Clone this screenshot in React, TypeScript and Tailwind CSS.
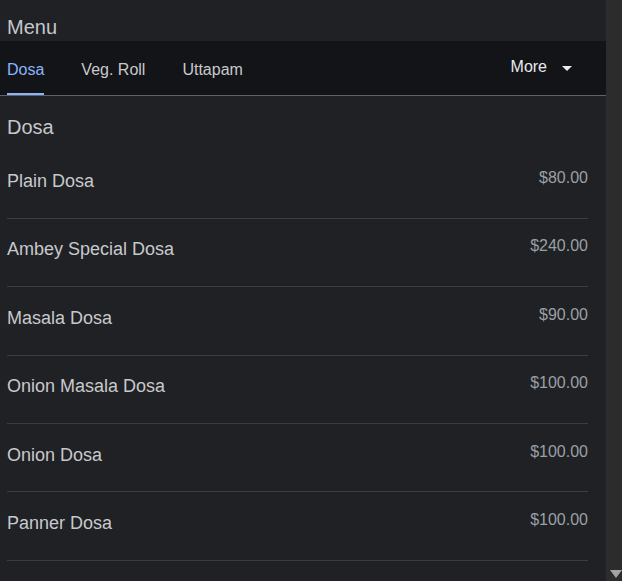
const tabs = ["Dosa", "Veg. Roll", "Uttapam"];

const items = [
  { name: "Plain Dosa", price: "$80.00" },
  { name: "Ambey Special Dosa", price: "$240.00" },
  { name: "Masala Dosa", price: "$90.00" },
  { name: "Onion Masala Dosa", price: "$100.00" },
  { name: "Onion Dosa", price: "$100.00" },
  { name: "Panner Dosa", price: "$100.00" },
];

export default function App() {
  return (
    <div className="flex h-[581px] w-[622px] overflow-hidden bg-[#202124] font-['Liberation_Sans',Arial,sans-serif]">
      <div className="flex min-w-0 flex-1 flex-col">
        <div className="h-[41px] px-[7px] pt-[13px] text-[20px] leading-[28px] text-[#c4c7cc]">Menu</div>

        <div className="flex h-[55px] border-b border-[#5f6368] bg-[#131418] pl-[7px]">
          <div className="flex gap-[37px]">
            {tabs.map((tab, i) => (
              <div
                key={tab}
                className={
                  i === 0
                    ? "flex h-[54px] items-center border-b-2 border-[#8ab4f8] pt-[5px] text-[16px] text-[#8ab4f8]"
                    : "flex h-[54px] items-center border-b-2 border-transparent pt-[5px] text-[16px] text-[#c8c9cc]"
                }
              >
                {tab}
              </div>
            ))}
          </div>
          <div className="ml-auto flex h-[54px] items-center gap-[15px] pr-[34px]">
            <span className="-mt-[3px] text-[16px] text-[#e8eaed]">More</span>
            <svg width="10" height="5" viewBox="0 0 10 5">
              <path d="M0 0h10L5 5z" fill="#e8eaed" />
            </svg>
          </div>
        </div>

        <div className="h-[54.5px] px-[7px] pt-[16.5px] text-[20px] leading-[28px] text-[#c4c7cc]">Dosa</div>

        <div className="pl-[7px] pr-[18px]">
          {items.map((item) => (
            <div key={item.name} className="flex h-[68.4px] justify-between border-b border-[#3c3d41]">
              <span className="mt-[18.5px] text-[18px] leading-[24px] text-[#c8c9cc]">{item.name}</span>
              <span className="mt-[15.5px] text-[16px] leading-[24px] text-[#9aa0a6]">{item.price}</span>
            </div>
          ))}
        </div>
      </div>

      <div className="flex w-[16px] flex-col justify-end bg-[#2c2c2c]">
        <svg width="16" height="12" viewBox="0 0 16 12" className="mb-[1px]">
          <path d="M4 2h12L10 10z" fill="#a3a3a3" />
        </svg>
      </div>
    </div>
  );
}
